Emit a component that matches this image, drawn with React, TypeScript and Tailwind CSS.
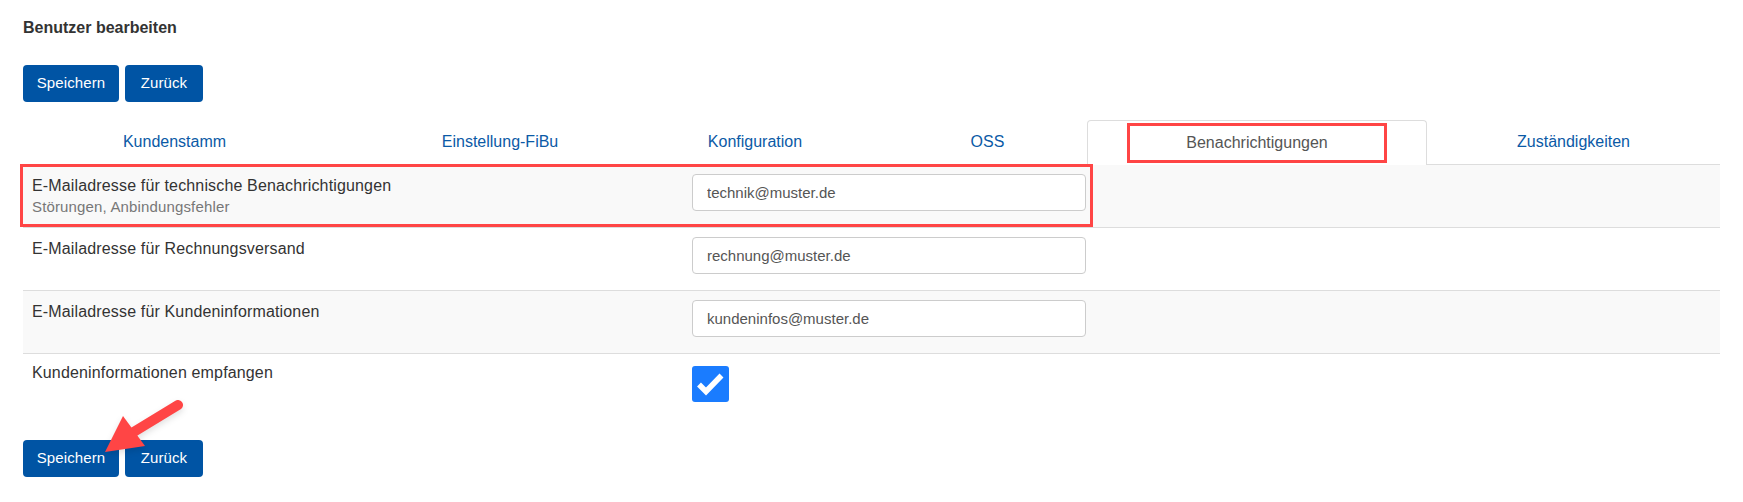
import { useState } from "react";

const tabs = [
  { label: "Kundenstamm", w: "w-[303px]" },
  { label: "Einstellung-FiBu", w: "w-[348px]" },
  { label: "Konfiguration", w: "w-[162px]" },
  { label: "OSS", w: "w-[251px] pl-[52px]" },
  { label: "Benachrichtigungen", w: "w-[340px]", active: true },
  { label: "Zuständigkeiten", w: "flex-1" },
];

const ButtonBar = () => (
  <div className="flex gap-[6px]">
    <button className="h-[37px] w-[96px] rounded-[4px] bg-[#0054a4] text-[15px] tracking-[0.1px] text-white">Speichern</button>
    <button className="h-[37px] w-[78px] rounded-[4px] bg-[#0054a4] text-[15px] tracking-[0.1px] text-white">Zurück</button>
  </div>
);

const EmailInput = ({ value }: { value: string }) => (
  <input
    readOnly
    defaultValue={value}
    className="h-[37px] w-[394px] rounded-[4px] border border-[#cccccc] bg-white px-[14px] text-[15px] text-[#555555] outline-none"
  />
);

const App = () => {
  const [receive, setReceive] = useState(true);

  return (
    <div className="relative h-[502px] w-full bg-white px-[23px] pt-[18px] font-[Liberation_Sans,Arial,sans-serif] text-[#333333]">
      <h1 className="text-[16px] font-bold leading-[20px]">Benutzer bearbeiten</h1>

      <div className="mt-[27px]">
        <ButtonBar />
      </div>

      {/* Tabs */}
      <div className="mt-[18px] flex h-[45px] border-b border-[#dddddd]">
        {tabs.map((tab) =>
          tab.active ? (
            <div
              key={tab.label}
              className={`relative -mb-px flex h-[45px] items-center justify-center rounded-t-[4px] border border-b-0 border-[#dddddd] bg-white text-[16px] text-[#555555] ${tab.w}`}
            >
              {tab.label}
              <div className="absolute left-[39px] top-[2px] h-[40px] w-[260px] border-[3px] border-[#ff4545]" />
            </div>
          ) : (
            <div key={tab.label} className={`flex h-[44px] items-center justify-center text-[16px] text-[#0b5aa6] ${tab.w}`}>
              {tab.label}
            </div>
          )
        )}
      </div>

      {/* Rows */}
      <div className="relative flex h-[62px] bg-[#f9f9f9]">
        <div className="w-[669px] pl-[9px] pt-[11px]">
          <div className="text-[16px] leading-[20px] tracking-[0.15px]">E-Mailadresse für technische Benachrichtigungen</div>
          <div className="text-[15px] leading-[21px] tracking-[0.15px] text-[#777777]">Störungen, Anbindungsfehler</div>
        </div>
        <div className="pt-[9px]">
          <EmailInput value="technik@muster.de" />
        </div>
        <div className="absolute left-[-3px] top-[-1px] h-[63px] w-[1073px] border-[3px] border-[#ff4545]" />
      </div>

      <div className="flex h-[63px] border-t border-[#dddddd] bg-white">
        <div className="w-[669px] pl-[9px] pt-[11px] text-[16px] leading-[20px] tracking-[0.15px]">E-Mailadresse für Rechnungsversand</div>
        <div className="pt-[9px]">
          <EmailInput value="rechnung@muster.de" />
        </div>
      </div>

      <div className="flex h-[63px] border-t border-[#dddddd] bg-[#f9f9f9]">
        <div className="w-[669px] pl-[9px] pt-[11px] text-[16px] leading-[20px] tracking-[0.15px]">E-Mailadresse für Kundeninformationen</div>
        <div className="pt-[9px]">
          <EmailInput value="kundeninfos@muster.de" />
        </div>
      </div>

      <div className="flex h-[50px] border-t border-[#dddddd]">
        <div className="w-[669px] pl-[9px] pt-[9px] text-[16px] leading-[20px] tracking-[0.15px]">Kundeninformationen empfangen</div>
        <div className="pt-[12px]">
          <button
            onClick={() => setReceive(!receive)}
            className={`flex h-[36px] w-[37px] items-center justify-center rounded-[3px] ${receive ? "bg-[#1a7cff]" : "border border-[#cccccc] bg-white"}`}
          >
            {receive && (
              <svg width="37" height="36" viewBox="0 0 37 36">
                <polyline points="7,18.5 14,25.5 29.5,9.5" fill="none" stroke="white" strokeWidth="5.5" />
              </svg>
            )}
          </button>
        </div>
      </div>

      <div className="mt-[37px]">
        <ButtonBar />
      </div>

      {/* annotation arrow */}
      <svg className="absolute left-[95px] top-[395px] drop-shadow-md" width="95" height="65" viewBox="0 0 95 65">
        <line x1="83" y1="10" x2="37" y2="38" stroke="#ff4545" strokeWidth="10" strokeLinecap="round" />
        <polygon points="10,57 28,21 50,51" fill="#ff4545" />
      </svg>
    </div>
  );
};

export default App;
